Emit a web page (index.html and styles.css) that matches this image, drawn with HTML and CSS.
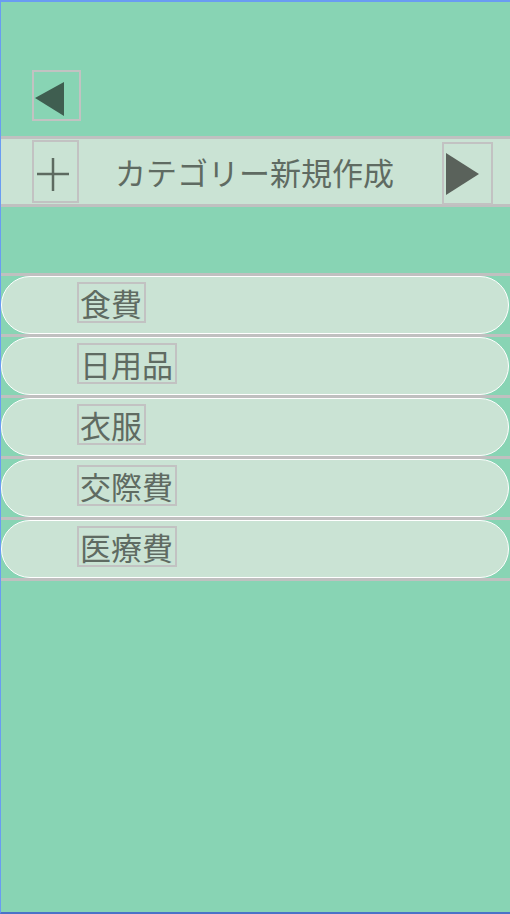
FILE: index.html
```html
<!DOCTYPE html>
<html lang="ja">
<head>
  <meta charset="UTF-8" />
  <meta name="viewport" content="width=device-width, initial-scale=1.0"/>
  <title>カテゴリー</title>
  <link rel="stylesheet" href="styles.css">
</head>
<body>
<div class="screen">
  <!-- back -->
  <div class="topbar">
    <div class="back-btn">
      <svg width="45" height="47" viewBox="0 0 45 47">
        <polygon points="1,26 30,10 30,44" fill="#3f5e50"/>
      </svg>
    </div>
  </div>

  <!-- new category bar -->
  <div class="new-bar">
    <div class="plus-btn">
      <svg width="43" height="59" viewBox="0 0 43 59">
        <line x1="3" y1="32" x2="35" y2="32" stroke="#5d6a60" stroke-width="2.5"/>
        <line x1="19" y1="16" x2="19" y2="49" stroke="#5d6a60" stroke-width="2.5"/>
      </svg>
    </div>
    <div class="new-title">カテゴリー新規作成</div>
    <div class="next-btn">
      <svg width="47" height="59" viewBox="0 0 47 59">
        <polygon points="2,9 35,30 2,51" fill="#5a625b"/>
      </svg>
    </div>
  </div>

  <ul class="cat-list">
    <li class="cat-row"><div class="pill"><span class="cat-name">食費</span></div></li>
    <li class="cat-row"><div class="pill"><span class="cat-name">日用品</span></div></li>
    <li class="cat-row"><div class="pill"><span class="cat-name">衣服</span></div></li>
    <li class="cat-row"><div class="pill"><span class="cat-name">交際費</span></div></li>
    <li class="cat-row"><div class="pill"><span class="cat-name">医療費</span></div></li>
  </ul>
</div>
</body>
</html>
```

FILE: styles.css
```css
body {
  margin: 0;
  padding: 0;
  font-family: "Noto Sans CJK JP", "Noto Sans", sans-serif;
  background-color: #88d4b4;
}

.screen {
  box-sizing: border-box;
  height: 914px;
  background-color: #88d4b4;
  border-top: 2px solid #6a9cf2;
  border-left: 1px solid #6a9cf2;
  border-bottom: 2px solid #4b72c8;
}

.topbar {
  height: 134px;
  padding-left: 31px;
  box-sizing: border-box;
  padding-top: 68px;
}

.back-btn {
  width: 45px;
  height: 47px;
  border: 2px solid #c2c2c2;
}
.back-btn svg,
.plus-btn svg,
.next-btn svg {
  display: block;
}

.new-bar {
  display: flex;
  align-items: flex-start;
  height: 65px;
  background-color: #cae3d4;
  border-top: 3px solid #c0c0c0;
  border-bottom: 3px solid #c0c0c0;
  padding-left: 31px;
}

.plus-btn {
  width: 43px;
  height: 59px;
  margin-top: 1px;
  border: 2px solid #c2c2c2;
}

.new-title {
  margin-left: 36px;
  font-size: 31px;
  line-height: 65px;
  color: #5f6b62;
  white-space: nowrap;
}

.next-btn {
  width: 47px;
  height: 59px;
  margin-top: 3px;
  margin-left: 48px;
  border: 2px solid #c2c2c2;
}

.cat-list {
  list-style: none;
  margin: 66px 0 0;
  padding: 0;
  border-bottom: 3px solid #c0c0c0;
}

.cat-row {
  border-top: 3px solid #c0c0c0;
}

.pill {
  box-sizing: border-box;
  height: 58px;
  margin-right: 1px;
  padding: 5px 0 0 75px;
  background-color: #cae3d4;
  border: 1.5px solid #ffffff;
  border-radius: 29px;
}

.cat-name {
  display: inline-block;
  font-size: 31px;
  line-height: 37px;
  padding: 0 2px 0 1px;
  color: #5f6b62;
  border: 2px solid #c2c2c2;
}
```
